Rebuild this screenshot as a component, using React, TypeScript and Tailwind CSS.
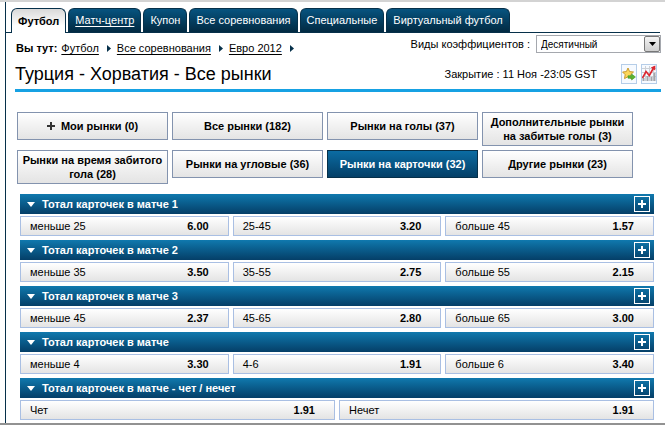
import clsx from "clsx";

const tabs = ["Футбол", "Матч-центр", "Купон", "Все соревнования", "Специальные", "Виртуальный футбол"];

const crumbs = ["Футбол", "Все соревнования", "Евро 2012"];

const filters = [
  { label: "Мои рынки (0)", icon: true },
  { label: "Все рынки (182)" },
  { label: "Рынки на голы (37)" },
  { label: "Дополнительные рынки на забитые голы (3)", tall: true },
  { label: "Рынки на время забитого гола (28)", tall: true },
  { label: "Рынки на угловые (36)" },
  { label: "Рынки на карточки (32)", active: true },
  { label: "Другие рынки (23)" },
];

const markets = [
  { title: "Тотал карточек в матче 1", odds: [["меньше 25", "6.00"], ["25-45", "3.20"], ["больше 45", "1.57"]] },
  { title: "Тотал карточек в матче 2", odds: [["меньше 35", "3.50"], ["35-55", "2.75"], ["больше 55", "2.15"]] },
  { title: "Тотал карточек в матче 3", odds: [["меньше 45", "2.37"], ["45-65", "2.80"], ["больше 65", "3.00"]] },
  { title: "Тотал карточек в матче", odds: [["меньше 4", "3.30"], ["4-6", "1.91"], ["больше 6", "3.40"]] },
  { title: "Тотал карточек в матче - чет / нечет", odds: [["Чет", "1.91"], ["Нечет", "1.91"]] },
];

const Tabs = () => (
  <nav className="flex gap-[2px] border-b border-[#06304a] pl-[5px] mr-[5px]">
    {tabs.map((tab, i) => (
      <a
        key={tab}
        href="#"
        className={clsx(
          "flex h-6 items-center whitespace-nowrap rounded-t-md border border-b-0 border-[#06304a] px-[6px] text-[11px]",
          i === 0
            ? "-mb-px h-[25px] bg-linear-to-b from-[#d9d9d9] to-white to-70% font-bold text-black"
            : "bg-linear-to-b from-[#075480] to-[#022a42] text-white",
          i === 1 && "underline underline-offset-2"
        )}
      >
        {tab}
      </a>
    ))}
  </nav>
);

const Breadcrumbs = () => (
  <div className="flex items-center text-[11px] leading-4">
    <span className="mr-1 font-bold">Вы тут:</span>
    {crumbs.map((crumb) => (
      <span key={crumb} className="flex items-center">
        <a href="#" className="underline underline-offset-2">
          {crumb}
        </a>
        <svg width="4" height="7" viewBox="0 0 4 7" className="ml-2 mr-[6px]">
          <path d="M0 0L4 3.5L0 7Z" fill="#06304a" />
        </svg>
      </span>
    ))}
  </div>
);

const OddsType = () => (
  <div className="flex items-center gap-[6px]">
    <label htmlFor="odds-type" className="text-[11px]">
      Виды коэффициентов :
    </label>
    <div className="relative">
      <select
        id="odds-type"
        className="block h-[18px] w-[125px] appearance-none border border-[#a5a8ae] bg-white pl-1 text-[10px] text-black"
      >
        <option>Десятичный</option>
      </select>
      <span className="pointer-events-none absolute inset-y-px right-px flex w-4 items-center justify-center rounded-[2px] border border-[#777] bg-linear-to-b from-[#f4f4f4] to-[#cfcfcf]">
        <svg width="7" height="4" viewBox="0 0 7 4">
          <path d="M0 0H7L3.5 4Z" fill="#000" />
        </svg>
      </span>
    </div>
  </div>
);

const StarIcon = () => (
  <svg width="14" height="16" viewBox="0 0 14 16">
    <path
      d="M6 2L7.6 5.6L11.5 6L8.7 8.7L9.5 12.6L6 10.7L2.5 12.6L3.2 8.7L.6 6L4.4 5.6Z"
      fill="#fbd65b"
      stroke="#c99a2e"
      strokeWidth="1"
      strokeLinejoin="round"
    />
    <path d="M6 9.8H9.6V8L13.4 11L9.6 14V12.2H6Z" fill="#5cb531" stroke="#3f9422" strokeWidth=".6" />
  </svg>
);

const ChartIcon = () => (
  <svg width="14" height="18" viewBox="0 0 14 18">
    <path d="M0 3.5H14M0 7.5H14M0 11.5H14M3.5 1V16M7.5 1V16M11.5 1V16" stroke="#ccd0d6" strokeWidth="1" />
    <path d="M1.5 16V13M5.5 16V11M9.5 16V12M12.5 16V8" stroke="#a3a6ac" strokeWidth="2" />
    <path d="M.5 13L4 6.5L7.3 10.5L11.5 3" fill="none" stroke="#dc2630" strokeWidth="1.6" />
    <path d="M8.8 2.6L13.4 .6L13.2 5.6Z" fill="#dc2630" />
  </svg>
);

const EventTitle = () => (
  <div className="ml-[9px] mr-1 flex h-[33px] items-center justify-between border-b-3 border-[#16a1e3] pr-1">
    <h1 className="text-[18px] leading-6">Турция - Хорватия - Все рынки</h1>
    <div className="flex items-center gap-1">
      <span className="mr-5 text-[11px]">Закрытие : 11 Ноя -23:05 GST</span>
      <button
        aria-label="Добавить в избранное"
        className="flex h-5 w-4 items-center justify-center border border-[#b5cde8] bg-[#f6faff]"
      >
        <StarIcon />
      </button>
      <button
        aria-label="Статистика"
        className="flex h-5 w-4 items-center justify-center border border-[#b5cde8] bg-[#f6faff]"
      >
        <ChartIcon />
      </button>
    </div>
  </div>
);

const Filters = () => (
  <div className="ml-[11px] mr-8 mt-5 grid grid-cols-4 items-start gap-1">
    {filters.map(({ label, icon, tall, active }) => (
      <div key={label} className="h-[34px]">
        <button
          className={clsx(
            "flex w-full items-center justify-center gap-[6px] border text-[11px] font-bold leading-[14px]",
            tall ? "h-[34px]" : "h-7",
            active
              ? "border-[#06304a] bg-linear-to-b from-[#0b6ca3] to-[#054068] text-white"
              : "border-[#8393ae] bg-linear-to-b from-white to-[#e4e4e4] text-black"
          )}
        >
          {icon && (
            <svg width="8" height="8" viewBox="0 0 8 8">
              <path d="M4 0V8M0 4H8" stroke="#333" strokeWidth="2" />
            </svg>
          )}
          <span>{label}</span>
        </button>
      </div>
    ))}
  </div>
);

const Market = ({ title, odds }: { title: string; odds: string[][] }) => (
  <section>
    <div className="flex h-5 items-center bg-linear-to-b from-[#1079ae] to-[#053f68] pl-[7px] pr-1 text-white">
      <svg width="8" height="5" viewBox="0 0 8 5">
        <path d="M0 0H8L4 5Z" fill="#fff" />
      </svg>
      <h2 className="ml-[7px] flex-1 text-[11px] font-bold">{title}</h2>
      <button aria-label="Добавить" className="flex h-4 w-4 items-center justify-center border border-white">
        <svg width="8" height="8" viewBox="0 0 8 8">
          <path d="M4 0V8M0 4H8" stroke="#fff" strokeWidth="2" />
        </svg>
      </button>
    </div>
    <div className={clsx("mt-[2px] grid gap-1", odds.length === 3 ? "grid-cols-3" : "grid-cols-2")}>
      {odds.map(([name, price]) => (
        <button
          key={name}
          className="flex h-5 items-center justify-between border border-[#a9bfe3] bg-linear-to-b from-white to-[#e4e4e4] pl-[9px] pr-[19px] text-[11px]"
        >
          <span>{name}</span>
          <span className="font-bold">{price}</span>
        </button>
      ))}
    </div>
  </section>
);

export default function App() {
  return (
    <div className="border-b-2 border-t-2 border-b-[#929292] border-t-[#d3d3d3] bg-white pl-[5px] font-['Liberation_Sans',Arial,sans-serif] text-black">
      <div className="border-l border-[#06304a] pb-[3px] pt-[6px]">
        <Tabs />
        <div className="ml-[10px] mr-1 mt-[2px] flex h-6 items-start justify-between">
          <div className="pt-[5px]">
            <Breadcrumbs />
          </div>
          <OddsType />
        </div>
        <EventTitle />
        <Filters />
        <main className="ml-[14px] mr-[11px] mt-[10px] flex flex-col gap-1">
          {markets.map((market) => (
            <Market key={market.title} {...market} />
          ))}
        </main>
      </div>
    </div>
  );
}
